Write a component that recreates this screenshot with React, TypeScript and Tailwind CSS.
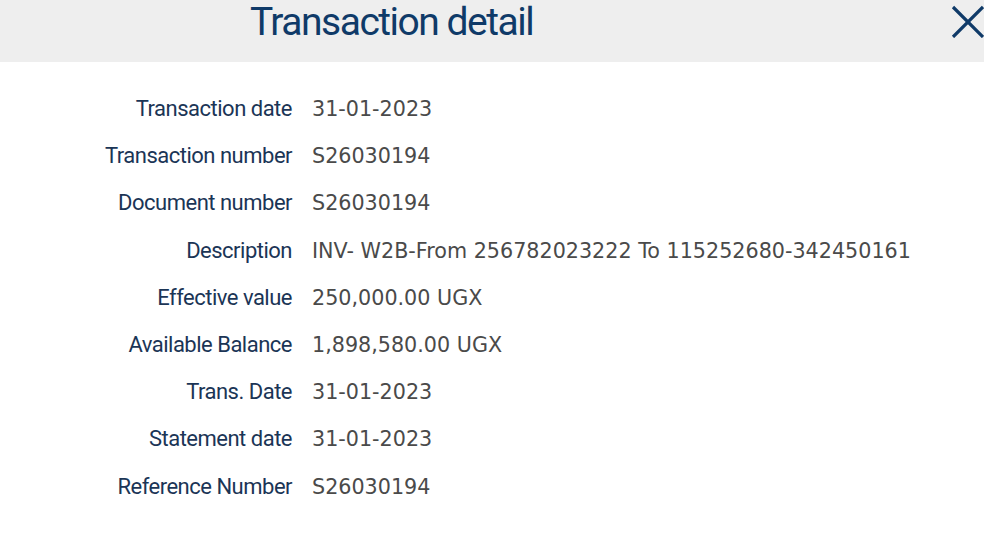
const rows = [
  ["Transaction date", "31-01-2023"],
  ["Transaction number", "S26030194"],
  ["Document number", "S26030194"],
  ["Description", "INV- W2B-From 256782023222 To 115252680-342450161"],
  ["Effective value", "250,000.00 UGX"],
  ["Available Balance", "1,898,580.00 UGX"],
  ["Trans. Date", "31-01-2023"],
  ["Statement date", "31-01-2023"],
  ["Reference Number", "S26030194"],
];

export default function App() {
  return (
    <div className="w-[984px] h-[541px] bg-white overflow-hidden">
      <div className="h-[62px] bg-[#eeeeee] flex items-start relative">
        <h1 className="pl-[250px] text-[39px] leading-[44px] tracking-[-1.5px] text-[#0f3a68] font-['Roboto',sans-serif]">
          Transaction detail
        </h1>
        <svg
          className="absolute left-[951px] top-[5px]"
          width="33"
          height="33"
          viewBox="0 0 33 33"
        >
          <path d="M2 2 L32 32 M32 2 L2 32" stroke="#0f3a68" strokeWidth="3.2" />
        </svg>
      </div>
      <div className="grid grid-cols-[292px_1fr] gap-x-[20px] pt-[33px]">
        {rows.map(([label, value], i) => (
          <div key={i} className="contents">
            <div className="h-[47.2px] leading-[28px] text-right text-[22px] tracking-[-0.5px] text-[#1b3556] font-['Roboto',sans-serif]">
              {label}
            </div>
            <div className="h-[47.2px] leading-[28px] text-[20.7px] text-[#4a4a4a] font-['DejaVu_Sans',sans-serif]">
              {value}
            </div>
          </div>
        ))}
      </div>
    </div>
  );
}
